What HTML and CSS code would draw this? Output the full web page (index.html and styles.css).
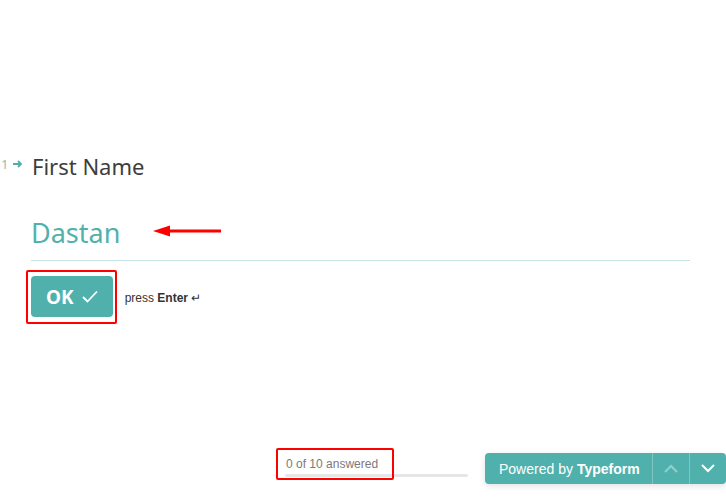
FILE: index.html
```html
<!DOCTYPE html>
<html lang="en">
<head>
    <meta charset="UTF-8">
    <meta name="viewport" content="width=device-width, initial-scale=1.0">
    <title>First Name</title>
    <link rel="stylesheet" href="styles.css">
</head>
<body>

    <div class="form">
        <div class="question">
            <span class="counter">1
                <svg class="counter-arrow" width="10" height="8" viewBox="0 0 10 8">
                    <path d="M0 4h8M5 1l3 3-3 3" fill="none" stroke="#4fb0ab" stroke-width="1.8"/>
                </svg>
            </span>
            <h1 class="title">First Name</h1>
        </div>

        <div class="answer">
            <span class="answer-text">Dastan</span>
            <!-- annotation arrow -->
            <svg class="mark-arrow" width="70" height="12" viewBox="0 0 70 12">
                <path d="M0 6L17 0.5V11.5Z" fill="#f00"/>
                <path d="M14 6H68" stroke="#f00" stroke-width="3"/>
            </svg>
        </div>

        <div class="actions">
            <span class="marked">
                <button class="ok-btn">OK
                    <svg width="16" height="13" viewBox="0 0 16 13">
                        <path d="M1 7l4.5 4.5L15 1.5" fill="none" stroke="#fff" stroke-width="1.8"/>
                    </svg>
                </button>
            </span>
            <span class="hint">press <b>Enter</b> &#8629;</span>
        </div>
    </div>

    <div class="footer">
        <div class="progress">
            <span class="progress-label">0 of 10 answered</span>
            <div class="progress-track"></div>
        </div>
        <div class="brand-bar">
            <span class="brand">Powered by <b>Typeform</b></span>
            <button class="nav-btn disabled">
                <svg width="14" height="9" viewBox="0 0 14 9">
                    <path d="M1 8l6-6 6 6" fill="none" stroke="currentColor" stroke-width="2"/>
                </svg>
            </button>
            <button class="nav-btn">
                <svg width="14" height="9" viewBox="0 0 14 9">
                    <path d="M1 1l6 6 6-6" fill="none" stroke="currentColor" stroke-width="2"/>
                </svg>
            </button>
        </div>
    </div>

</body>
</html>
```

FILE: styles.css
```css
body {
    margin: 0;
    height: 500px;
    overflow: hidden;
    display: flex;
    flex-direction: column;
    background: #fff;
    font-family: "Noto Sans", "Open Sans", sans-serif;
}
.form {
    padding: 150px 36px 0 31px;
}
.question {
    display: flex;
    align-items: center;
    height: 32px;
}
.counter {
    display: flex;
    align-items: center;
    width: 32px;
    margin-left: -30px;
    gap: 5px;
    font-size: 13px;
    color: #8fbdb3;
    margin-top: -5px;
}
.title {
    margin: 0 0 0 -1px;
    font-size: 22px;
    font-weight: normal;
    color: #3d3d3d;
    line-height: 32px;
}
.answer {
    position: relative;
    margin-top: 34px;
    padding-bottom: 10px;
    border-bottom: 1px solid #c4e5e3;
}
.answer-text {
    font-size: 27px;
    line-height: 34px;
    color: #52b1ac;
}
.mark-arrow {
    position: absolute;
    left: 122px;
    top: 9px;
}
.actions {
    display: flex;
    align-items: center;
    gap: 12px;
    margin-top: 15px;
}
.marked {
    position: relative;
    display: flex;
}
.marked::after {
    content: "";
    position: absolute;
    left: -5px;
    right: -4px;
    top: -6px;
    bottom: -7px;
    border: 2px solid #f00;
    border-radius: 2px;
}
.ok-btn {
    display: flex;
    align-items: center;
    gap: 8px;
    height: 41px;
    padding: 0 15px 0 15px;
    border: none;
    border-radius: 4px;
    background-color: #50b1ac;
    color: #fff;
    font-family: "Noto Sans", sans-serif;
    font-size: 19px;
    font-weight: bold;
}
.hint {
    font-family: "Liberation Sans", Arial, sans-serif;
    font-size: 12px;
    color: #333;
    margin-top: 2px;
}
.footer {
    margin-top: auto;
    display: flex;
    justify-content: flex-end;
    align-items: flex-end;
    gap: 17px;
    padding-bottom: 16px;
    font-family: "Liberation Sans", Arial, sans-serif;
}
.progress {
    width: 183px;
    margin-bottom: 7px;
}
.progress-label {
    position: relative;
    display: inline-block;
    margin-left: 1px;
    font-size: 12px;
    line-height: 14px;
    color: #7a7a7a;
}
.progress-label::after {
    content: "";
    position: absolute;
    left: -10px;
    right: -16px;
    top: -9px;
    bottom: -9px;
    border: 2px solid #f00;
    border-radius: 2px;
}
.progress-track {
    height: 3px;
    margin-top: 2px;
    border-radius: 2px;
    background-color: #e6e6e6;
}
.brand-bar {
    display: flex;
    height: 31px;
    border-radius: 4px;
    background-color: #50b1ac;
    box-shadow: 0 2px 6px rgba(0, 0, 0, 0.12);
    color: #fff;
}
.brand {
    display: flex;
    align-items: center;
    width: 167px;
    padding-left: 14px;
    box-sizing: border-box;
    font-size: 14px;
}
.brand b {
    margin-left: 4px;
}
.nav-btn {
    width: 37px;
    padding: 0;
    border: none;
    border-left: 1px solid #7fc6c2;
    background: none;
    color: #fff;
    display: flex;
    align-items: center;
    justify-content: center;
}
.nav-btn.disabled {
    color: #8fd0cc;
}
```
